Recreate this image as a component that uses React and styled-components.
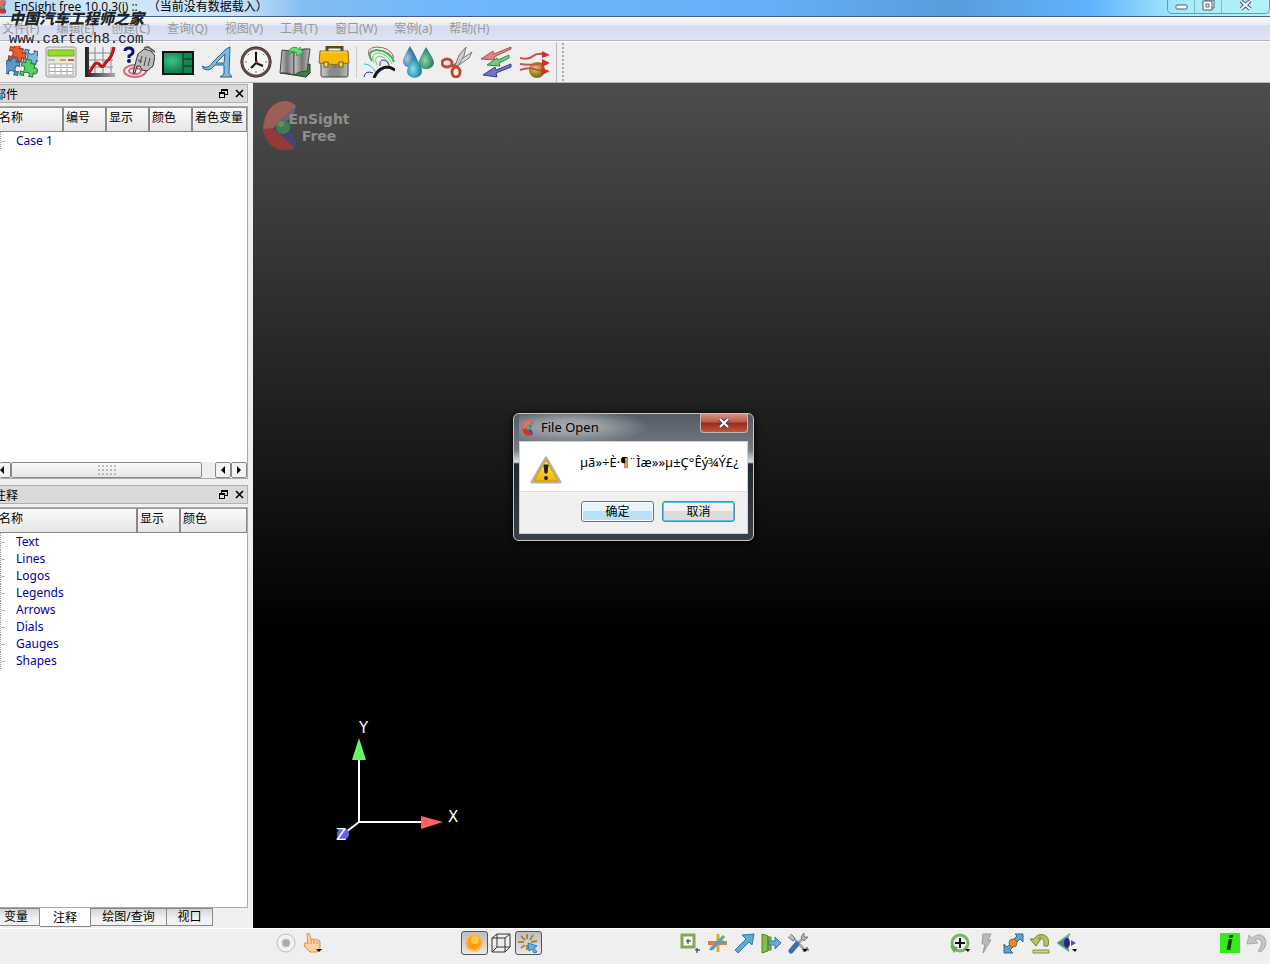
import React from "react";
import styled, { createGlobalStyle } from "styled-components";

const puzzlePiece = "M0 0h4c-3-5 8-5 5 0h4v4c5-3 5 8 0 5v4h-4c3-5-8-5-5 0h-4v-4c5 3 5-8 0-5z";

const icons = {
  puzzle: (
    <g transform="rotate(10 16 16)">
      <path d={puzzlePiece} transform="translate(2 3)" fill="#ea5a2e" stroke="#8c3318" />
      <path d={puzzlePiece} transform="translate(30 3) rotate(90)" fill="#7db8e0" stroke="#355f85" />
      <path d={puzzlePiece} transform="translate(1 30) rotate(-90)" fill="#5599cf" stroke="#2d5c88" />
      <path d={puzzlePiece} transform="translate(16 16)" fill="#5dce67" stroke="#2b7d39" />
    </g>
  ),
  calculator: (
    <>
      <rect x="1" y="1" width="30" height="30" rx="2" fill="#e6e6e2" stroke="#9c9c98" />
      <rect x="3" y="4" width="26" height="6" fill="#95dc22" stroke="#75a83a" />
      <path d="M3 13h7v2H3z" fill="#bbb" />
      <path d="M15 13h6v2h-6z" fill="#ec9c35" />
      <path d="M23 13h6v2h-6z" fill="#dc5545" />
      <path d="M4 18h24v11H4zM4 21.500h24M4 25.500h24M10 18v11M16 18v11M22 18v11" fill="#fff" stroke="#aaa" />
    </>
  ),
  graph: (
    <>
      <path d="M1 1h4v26h26v4H1z" fill="url(#axisFade)" />
      <path d="M5 7h24M5 14h24M5 21h24M11 1v26M19 1v26M27 1v26" fill="none" stroke="#888" />
      <path d="M5 27L10 19Q13 15 16 19T22 16Q28 12 30 1" fill="none" stroke="#8a0a10" strokeWidth="3" />
      <path d="M5 27L10 19Q13 15 16 19T22 16Q28 12 30 1" fill="none" stroke="#d0141c" strokeWidth="2" />
    </>
  ),
  pick: (
    <>
      <g fill="none" stroke="#d46c74" strokeWidth="2">
        <ellipse cx="12" cy="25" rx="11" ry="6" />
        <ellipse cx="12" cy="25" rx="6" ry="3" />
      </g>
      <path d="M2 5Q2 2 6 2t4 4q0 2-4 4v2" fill="none" stroke="#101080" strokeWidth="3" />
      <circle cx="6" cy="15" r="2" fill="#101080" />
      <path d="M10 27l3-12 2-7 6-5 7 2 4 5-2 10-6 5-5-1-2-4-3 0-2 7z" fill="#bdbdbd" stroke="#333" />
      <path d="M17 17l2-7M21 20l2-9M25 20l2-8M15 14l4 2" fill="none" stroke="#444" />
      <path d="M21 2l4-1 7 5" fill="none" stroke="#666" strokeWidth="2" />
    </>
  ),
  viewport: (
    <>
      <rect x="1" y="6" width="30" height="22" fill="url(#greenPane)" stroke="#111" strokeWidth="2" />
      <path d="M21 6v22M21 13h10M21 20h10" stroke="#082f20" />
    </>
  ),
  letter: (
    <path
      d="M1 20Q7 24 12 16L25 3 29 1 28 27 31 31H19L23 28 23 19H14Q10 24 7 24 2 24 1 20zM15 17H23L24 8z"
      fill="#7dbbe2"
      stroke="#305f84"
      fillRule="evenodd"
    />
  ),
  clock: (
    <>
      <circle cx="16" cy="16" r="14" fill="#f6f6f4" stroke="#655051" strokeWidth="3" />
      <circle cx="16" cy="16" r="15" fill="none" stroke="#4a3a3a" />
      <path d="M16 5v2M16 25v2M5 16h2M25 16h2M8 8l1 1M23 23l1 1M24 8l-1 1M8 24l1-1" stroke="#777" />
      <path d="M16 6v11l7 3M16 17l-5 5" fill="none" stroke="#111" strokeWidth="2" />
      <path d="M15 15h3v2h-3z" fill="#d22" />
    </>
  ),
  book: (
    <>
      <path d="M1 27l14 2 12 2 4-4V18L16 22z" fill="#3d8042" stroke="#223d24" />
      <path d="M3 4q8 0 12 3v22q-7-3-14-2z" fill="url(#page)" stroke="#444" />
      <path d="M15 7q6-5 16-4l-3 22q-8 0-13 4z" fill="url(#page)" stroke="#444" />
      <path d="M11 3Q16-1 21 4V1l3 6-7 3 1-3q-4-3-7-1v3H9z" fill="#6ade7e" stroke="#35a04b" />
    </>
  ),
  toolbox: (
    <>
      <path d="M9 5V1h15v4" fill="none" stroke="#5b4a14" strokeWidth="3" />
      <path d="M3 16h27v13q0 2-2 2H5q-2 0-2-2z" fill="url(#page)" stroke="#444" />
      <path d="M2 5h28l1 12q-15 3-30 0z" fill="#f6b90c" stroke="#99690c" />
      <path d="M3 6h26" stroke="#ffdc62" />
      <rect x="6" y="16" width="4" height="5" fill="#f5d84d" stroke="#775914" />
      <rect x="21" y="16" width="4" height="5" fill="#f5d84d" stroke="#775914" />
      <path d="M12 22h8l2 8H10z" fill="#8a8a8a" />
    </>
  ),
  contour: (
    <g fill="none">
      <path d="M8 14Q1 2 13 1Q28 1 31 12" stroke="#cb4b4b" />
      <path d="M9 15Q3 5 14 4Q27 5 31 16" stroke="#41b45b" strokeWidth="2" />
      <path d="M11 17Q7 8 15 7Q25 8 29 18M14 19Q10 11 17 10Q23 11 26 19" stroke="#69cf70" />
      <path d="M1 18Q9 18 13 27" stroke="#35bdd0" />
      <path d="M17 20q-1-6 4-6q4 1 5 5M1 31q1-7 9-4" stroke="#3434b1" />
      <path d="M11 32Q15 21 26 21L32 24" stroke="#151515" strokeWidth="3" />
    </g>
  ),
  drops: (
    <>
      <path d="M8 0q-7 12-7 15c0 9 15 8 14-1Q14 10 8 0z" fill="url(#blueDrop)" />
      <path d="M24 1q-7 12-7 15c0 10 15 9 15 0Q31 12 24 1z" fill="url(#greenDrop)" />
      <path d="M13 10Q5 21 5 25c0 9 15 9 15 0Q20 21 13 10z" fill="url(#cyanDrop)" />
    </>
  ),
  scissors: (
    <>
      <path d="M12 19L31 6l-3 6L15 21z" fill="#ddd" stroke="#777" />
      <path d="M14 20L18 9 25 1l-2 9-6 10z" fill="#ccc" stroke="#777" />
      <g fill="none" stroke="#c44831" strokeWidth="3">
        <ellipse cx="6" cy="17" rx="5" ry="4" />
        <ellipse cx="15" cy="26" rx="4" ry="5" />
        <path d="M10 19l6 2" />
      </g>
    </>
  ),
  vectors: (
    <>
      <path d="M31 1L14 8l-1-3L1 13l14 1-1-3L31 3z" fill="#e08387" stroke="#b0505a" />
      <path d="M29 9l-11 5-1-2-10 7 13 1-1-3 10-5z" fill="#6fd07c" stroke="#2d8b42" />
      <path d="M31 18l-15 6-1-3L3 29l14 2-1-4 15-6z" fill="#7373cb" stroke="#3c3c91" />
    </>
  ),
  streamlines: (
    <>
      <circle cx="18" cy="24" r="8" fill="url(#ball)" />
      <path d="M1 12q9 2 13-2t14-1M1 18q12 2 27-1M1 24q8-3 14-1t13 2" fill="none" stroke="#c8524a" strokeWidth="2" />
      <path d="M23 5l8 4-8 3zM23 13l8 4-8 4zM22 22l9 3-8 4z" fill="#d82d2d" />
    </>
  ),
  record: (
    <>
      <circle cx="11" cy="10" r="9" fill="#f2f2f2" stroke="#bbb" />
      <circle cx="11" cy="10" r="4" fill="#aaa" stroke="#c5c5c5" />
    </>
  ),
  hand: (
    <>
      <path d="M5 1q2-2 3 1l1 5q2-2 3 0 2-2 3 0 2-1 3 2l0 6-3 4H8l-5-5-1-3q1-2 3-1l1 1z" fill="#ffd0a0" stroke="#df8a45" />
      <path d="M9 7v4M12 7v4M15 8v3" stroke="#df8a45" />
      <path d="M14 16h6l-3 3z" fill="#000" />
    </>
  ),
  sun: (
    <>
      <circle cx="10" cy="10" r="7" fill="#ff9d16" />
      <circle cx="10" cy="10" r="8" fill="none" stroke="#ffb23a" strokeWidth="2" strokeDasharray="2 1" />
      <circle cx="11" cy="7" r="4" fill="#ffc544" />
    </>
  ),
  cube: <path d="M1 5h13v14H1zM1 5l5-4h13v13l-5 5M14 5l5-4M6 1v13h13M1 19l5-5" fill="none" stroke="#333" />,
  select: (
    <>
      <path d="M9 1v5M3 3l4 4M0 9h6M3 15l4-3M15 2l-3 5M13 9l6-1M9 12v5" fill="none" stroke="#aa883c" strokeWidth="2" />
      <path d="M10 10l9 3-3 2 3 4-3 1-2-4-3 2z" fill="#65b4e5" stroke="#347bab" />
    </>
  ),
  addRegion: (
    <>
      <rect x="2" y="2" width="12" height="12" fill="#fff" stroke="#84a652" strokeWidth="3" />
      <path d="M8 6v5M6 8h5M17 15v5M15 17h5" stroke="#222" />
    </>
  ),
  axes: (
    <>
      <path d="M11 1v18" stroke="#d4ac32" strokeWidth="3" />
      <path d="M1 10h19" stroke="#e0803c" strokeWidth="4" />
      <path d="M17 3L5 16" stroke="#5fae69" strokeWidth="3" />
      <path d="M16 9h-5L4 16" fill="none" stroke="#5999c6" strokeWidth="3" strokeLinecap="round" />
    </>
  ),
  arrow: <path d="M1 17L12 6 8 2 20 1 18 12 15 9 4 20z" fill="#5ea9d5" stroke="#3976a0" />,
  exit: (
    <>
      <path d="M1 1l6 2v15l-6 2zM7 4h3v13H7z" fill="#85bc43" stroke="#55852c" />
      <path d="M8 8h6V4l6 6-6 6v-4H8z" fill="#67aad6" stroke="#397aa4" />
    </>
  ),
  tools: (
    <>
      <path d="M5 5L17 17M16 4L4 17" stroke="#aaa" strokeWidth="3" />
      <path d="M3 1l4 4-2 3-5-4M13 4l3-4v4h4l-4 4zM15 19l4-5 2 4" fill="#bbb" stroke="#777" />
      <path d="M9 11L3 18" stroke="#3d6daf" strokeWidth="5" strokeLinecap="round" />
      <path d="M14 16h6l-3 3z" fill="#000" />
    </>
  ),
  rotate: (
    <>
      <circle cx="11" cy="10" r="8" fill="none" stroke="#7fb070" strokeWidth="3" />
      <circle cx="11" cy="10" r="6" fill="#eee" />
      <path d="M1 13l8 1-4 6z" fill="#67a855" />
      <path d="M11 5v10M6 10h10" stroke="#111" strokeWidth="2" />
      <path d="M16 16h5l-2 3z" fill="#000" />
    </>
  ),
  bolt: <path d="M7 1h8l-3 6h3l-8 13 2-9H6z" fill="#bbb" stroke="#999" />,
  resize: (
    <>
      <path d="M12 1h8v8l-3-3-4 4-3-3 4-4zM1 11l3 3 4-4 3 3-4 4 3 3H1z" fill="#5ca1cf" stroke="#35698d" />
      <circle cx="10" cy="10" r="4" fill="#e98c29" stroke="#a65c17" />
    </>
  ),
  reset: (
    <>
      <path d="M0 6h4q4-6 10-4t4 11h-4q1-6-2-8T8 6h3l-5 7z" fill="#b7c45c" stroke="#777e32" />
      <path d="M3 17h16v3H3z" fill="#d4d67f" stroke="#888b42" />
    </>
  ),
  eye: (
    <>
      <path d="M13 1L1 10l11 8" fill="none" stroke="#63b689" strokeWidth="2" />
      <path d="M1 10l11-7q-2 7 0 14z" fill="#667580" />
      <ellipse cx="10" cy="10" rx="3" ry="5" fill="#282884" />
      <path d="M14 7l5 3-5 3z" fill="#5555a4" />
      <path d="M15 16h5l-2 3z" fill="#000" />
    </>
  ),
  undo: <path d="M1 11l2-9 3 3q7-6 12-1 5 7-3 15l-3-1q6-8 2-11-3-2-5 0l3 3z" fill="#c5c5c5" stroke="#aaa" />,
};

const mainTools = [
  ["puzzle", "Parts"],
  ["calculator", "Calculator"],
  ["graph", "Plot"],
  ["pick", "Query"],
  ["viewport", "Viewports"],
  ["letter", "Annotations"],
  ["clock", "Time"],
  ["book", "Flipbook"],
  ["toolbox", "Toolbox"],
];
const partTools = [
  ["contour", "Contours"],
  ["drops", "Isosurfaces"],
  ["scissors", "Clips"],
  ["vectors", "Vector arrows"],
  ["streamlines", "Particle traces"],
];
const bottomGroups = [
  [["record", "Record"], ["hand", "Pick mode"]],
  [["sun", "Shaded", true], ["cube", "Hidden line"], ["select", "Highlight", true]],
  [["addRegion", "Add region"], ["axes", "Axes"], ["arrow", "Line tool"], ["exit", "Plane tool"], ["tools", "Tools"]],
  [["rotate", "Rotate"], ["bolt", "Fast display"], ["resize", "Fit"], ["reset", "Reset"], ["eye", "View"]],
];

const menus = ["文件(F)", "编辑(E)", "创建(C)", "查询(Q)", "视图(V)", "工具(T)", "窗口(W)", "案例(a)", "帮助(H)"];
const partColumns = [["名称", 64], ["编号", 43], ["显示", 43], ["颜色", 43], ["着色变量", 54]];
const noteColumns = [["名称", 138], ["显示", 43], ["颜色", 66]];
const notes = ["Text", "Lines", "Logos", "Legends", "Arrows", "Dials", "Gauges", "Shapes"];

function Icon({ name, size }) {
  return (
    <svg width={size} height={size} viewBox={`0 0 ${size} ${size}`} aria-hidden="true">
      {icons[name]}
    </svg>
  );
}

function Logo({ width, height }) {
  return (
    <svg width={width} height={height} viewBox="0 0 36 50" aria-hidden="true">
      <path d="M33 5Q28 0 21 0 9 1 3 14T2 35Q7 48 19 49 28 50 32 46L10 27z" fill="#d8322c" />
      <path d="M33 5Q28 0 21 0 9 1 3 14L0 28 10 27z" fill="#e07264" />
      <path d="M33 5L10 27 32 47Q34 42 31 36L25 26 30 16z" fill="#3b4a9c" />
      <path d="M33 5L10 27 20 22 30 16z" fill="#7a83ad" />
      <circle cx="20" cy="26" r="7" fill="#43a852" />
      <circle cx="18" cy="23" r="3" fill="#7cc784" />
    </svg>
  );
}

function Gradients() {
  return (
    <Defs aria-hidden="true">
      <defs>
        <linearGradient id="axisFade"><stop stopColor="#222" /><stop offset="1" stopColor="#aaa" /></linearGradient>
        <linearGradient id="page"><stop stopColor="#ccc" /><stop offset="0.5" stopColor="#777" /><stop offset="1" stopColor="#bbb" /></linearGradient>
        <radialGradient id="greenPane" cx="0.3" cy="0.4"><stop stopColor="#3fc28a" /><stop offset="1" stopColor="#12824e" /></radialGradient>
        <radialGradient id="blueDrop" cx="0.3" cy="0.6"><stop stopColor="#a5cceb" /><stop offset="1" stopColor="#37719f" /></radialGradient>
        <radialGradient id="greenDrop" cx="0.4" cy="0.6"><stop stopColor="#91d2b2" /><stop offset="1" stopColor="#318460" /></radialGradient>
        <radialGradient id="cyanDrop" cx="0.4" cy="0.6"><stop stopColor="#8be0ed" /><stop offset="1" stopColor="#228aa4" /></radialGradient>
        <radialGradient id="ball" cx="0.4" cy="0.4"><stop stopColor="#e8d858" /><stop offset="1" stopColor="#7c761b" /></radialGradient>
        <linearGradient id="warn" x2="0" y2="1"><stop stopColor="#ffe965" /><stop offset="1" stopColor="#f4b400" /></linearGradient>
      </defs>
    </Defs>
  );
}

function PanelTitle({ text }) {
  return (
    <TitleRow>
      <h2>{text}</h2>
      <PlainButton aria-label="Float">
        <svg width="9" height="9" viewBox="0 0 9 9" shapeRendering="crispEdges">
          <path d="M2 0h7v6H6V5h2V2H3v1H2zM0 3h6v6H0zM1 5v3h4V5z" fill="#000" fillRule="evenodd" />
        </svg>
      </PlainButton>
      <PlainButton aria-label="Close">
        <svg width="9" height="9" viewBox="0 0 9 9">
          <path d="M1 1l7 7M8 1L1 8" stroke="#000" strokeWidth="1.600" />
        </svg>
      </PlainButton>
    </TitleRow>
  );
}

function Tree({ columns, rows }) {
  return (
    <TreeTable>
      <thead>
        <tr>
          {columns.map(([label, width]) => (
            <HeadCell key={label} $width={width}>{label}</HeadCell>
          ))}
        </tr>
      </thead>
      <tbody>
        {rows.map((row) => (
          <tr key={row}>
            <NameCell colSpan={columns.length}>{row}</NameCell>
          </tr>
        ))}
      </tbody>
    </TreeTable>
  );
}

function FileDialog() {
  return (
    <Dialog role="dialog" aria-labelledby="dialog-title">
      <DialogTitle>
        <Logo width={12} height={16} />
        <h2 id="dialog-title">File Open</h2>
        <DialogClose aria-label="Close">
          <svg width="12" height="10" viewBox="0 0 12 10">
            <path d="M2 1l8 8M10 1L2 9" stroke="#444" strokeWidth="4" />
            <path d="M2 1l8 8M10 1L2 9" stroke="#fff" strokeWidth="2" />
          </svg>
        </DialogClose>
      </DialogTitle>
      <DialogBody>
        <Message>
          <svg width="32" height="30" viewBox="0 0 32 30" aria-hidden="true">
            <path d="M16 3L30 27H2z" fill="url(#warn)" stroke="#b5b2a8" strokeWidth="3" strokeLinejoin="round" />
            <path d="M16 5L28 26H4z" fill="url(#warn)" stroke="#d89a00" />
            <path d="M14 10h4l-1 8h-2z" fill="#222" stroke="#222" />
            <circle cx="16" cy="23" r="2" fill="#222" />
          </svg>
          <p>µã»÷È·¶¨Ìæ»»µ±Ç°Êý¾Ý£¿</p>
        </Message>
        <Actions>
          <ActionButton>确定</ActionButton>
          <ActionButton $focused>取消</ActionButton>
        </Actions>
      </DialogBody>
    </Dialog>
  );
}

function App() {
  return (
    <Window>
      <GlobalStyle />
      <Gradients />
      <TitleBar>
        <Logo width={10} height={14} />
        <h1>EnSight free 10.0.3(i) ::</h1>
        <span>（当前没有数据载入）</span>
        <WindowButtons>
          <WindowButton aria-label="Minimize">
            <svg width="13" height="13" viewBox="0 0 13 13"><rect x="1" y="5" width="11" height="4" rx="1" fill="#fff" stroke="#50566b" /></svg>
          </WindowButton>
          <WindowButton aria-label="Restore">
            <svg width="13" height="13" viewBox="0 0 13 13">
              <path d="M4 0h8v8H4z" fill="#fff" stroke="#50566b" />
              <path d="M1 1h9v9H1zM4 4h3v3H4z" fill="#fff" stroke="#50566b" />
            </svg>
          </WindowButton>
          <WindowButton aria-label="Close" $wide>
            <svg width="13" height="13" viewBox="0 0 13 13">
              <path d="M2 1l9 8M11 1L2 9" stroke="#50566b" strokeWidth="4" />
              <path d="M2 1l9 8M11 1L2 9" stroke="#fff" strokeWidth="2" />
            </svg>
          </WindowButton>
        </WindowButtons>
      </TitleBar>
      <MenuBar>
        {menus.map((menu) => (
          <MenuButton key={menu}>{menu}</MenuButton>
        ))}
      </MenuBar>
      <Watermark>
        <strong>中国汽车工程师之家</strong>
        <span>www.cartech8.com</span>
      </Watermark>
      <Toolbar>
        {mainTools.map(([name, label]) => (
          <PlainButton key={name} aria-label={label}><Icon name={name} size={32} /></PlainButton>
        ))}
        <Separator />
        {partTools.map(([name, label]) => (
          <PlainButton key={name} aria-label={label}><Icon name={name} size={32} /></PlainButton>
        ))}
        <Grip />
      </Toolbar>
      <Main>
        <Sidebar>
          <Panel $grow={395}>
            <PanelTitle text="部件" />
            <PanelBody>
              <Tree columns={partColumns} rows={["Case 1"]} />
              <ScrollBar>
                <ScrollButton aria-label="Scroll back" $small><ScrollArrow /></ScrollButton>
                <ScrollThumb><i /></ScrollThumb>
                <ScrollTrack />
                <ScrollButton aria-label="Scroll left"><ScrollArrow /></ScrollButton>
                <ScrollButton aria-label="Scroll right"><ScrollArrow $right /></ScrollButton>
              </ScrollBar>
            </PanelBody>
          </Panel>
          <Panel $grow={423}>
            <PanelTitle text="注释" />
            <PanelBody>
              <Tree columns={noteColumns} rows={notes} />
            </PanelBody>
          </Panel>
          <Tabs>
            <Tab $width={40}>变量</Tab>
            <Tab $width={51} $active>注释</Tab>
            <Tab $width={76}>绘图/查询</Tab>
            <Tab $width={46}>视口</Tab>
          </Tabs>
        </Sidebar>
        <Viewport>
          <Brand>
            <Logo width={36} height={50} />
            <p>EnSight<br />Free</p>
          </Brand>
          <Triad width="150" height="130" viewBox="0 0 150 130">
            <path d="M29 38V102H93M29 102L16 112" fill="none" stroke="#fff" strokeWidth="2" />
            <path d="M29 18l7 22H22z" fill="#62fa62" />
            <path d="M91 96l22 6-22 7z" fill="#ff6262" />
            <circle cx="13" cy="114" r="6" fill="#6262f0" />
            <text x="29" y="13">Y</text>
            <text x="118" y="102">X</text>
            <text x="6" y="120">Z</text>
          </Triad>
        </Viewport>
      </Main>
      <BottomBar>
        {bottomGroups.map((group, index) => (
          <Group key={index}>
            {group.map(([name, label, pressed]) => (
              <SmallButton key={name} aria-label={label} $pressed={pressed}>
                <Icon name={name} size={21} />
              </SmallButton>
            ))}
          </Group>
        ))}
        <Group>
          <SmallButton aria-label="Information"><Info>i</Info></SmallButton>
          <SmallButton aria-label="Undo"><Icon name="undo" size={21} /></SmallButton>
        </Group>
      </BottomBar>
      <FileDialog />
    </Window>
  );
}

export default App;

const GlobalStyle = createGlobalStyle`
  * {
    box-sizing: border-box;
  }
  body {
    margin: 0;
    font-family: "Noto Sans", "Noto Sans CJK SC", sans-serif;
    font-size: 12px;
    color: #000;
  }
  h1, h2, p {
    margin: 0;
    font-size: 12px;
    font-weight: normal;
  }
  button {
    padding: 0;
    color: #000;
    font: inherit;
  }
  svg {
    display: block;
    flex: none;
  }
`;

const Defs = styled.svg`
  position: absolute;
  width: 0;
  height: 0;
`;

const Window = styled.div`
  position: relative;
  display: flex;
  flex-direction: column;
  min-height: 100vh;
  overflow: hidden;
  background: #efefef;
`;

const TitleBar = styled.header`
  display: flex;
  height: 17px;
  line-height: 14px;
  border-bottom: 1px solid #41618c;
  overflow: hidden;
  background: linear-gradient(90deg, #b5d8f5 0%, #d3e8f8 8%, #c5e1f8 19%, #83bdf2 24%, #70b8fb 35%, #66b0f8 60%, #589ddb 75%, #61b3ff 86%, #a5ecfa 93%, #b4f3f6 100%);
  > svg {
    margin-left: -3px;
  }
  h1 {
    margin-left: 7px;
    font-family: "Open Sans", sans-serif;
    white-space: nowrap;
  }
  span {
    margin-left: 10px;
    white-space: nowrap;
  }
`;

const WindowButtons = styled.div`
  display: flex;
  height: 14px;
  margin-left: auto;
  border: 1px solid #639ba9;
  border-top: 0;
  border-radius: 0 0 5px 5px;
`;

const WindowButton = styled.button`
  display: flex;
  width: ${(props) => (props.$wide ? "47px" : "27px")};
  align-items: center;
  justify-content: center;
  border: 0;
  border-right: ${(props) => (props.$wide ? "0" : "1px solid #82bac5")};
  background: transparent;
`;

const MenuBar = styled.nav`
  display: flex;
  gap: 17px;
  height: 24px;
  padding: 0 0 2px 2px;
  border-bottom: 1px solid #aeb2c4;
  background: linear-gradient(#fdfdff 0, #e8ebf5 8px, #d5dbee 9px, #dfe4f4 100%);
`;

const MenuButton = styled.button`
  border: 0;
  background: transparent;
  color: #999;
  white-space: nowrap;
`;

const Watermark = styled.div`
  position: absolute;
  top: 8px;
  left: 9px;
  display: flex;
  flex-direction: column;
  color: #222;
  strong {
    font: italic 900 15px/20px "Noto Sans CJK SC", sans-serif;
  }
  span {
    font: 14px/22px "Liberation Mono", monospace;
  }
`;

const Toolbar = styled.div`
  display: flex;
  gap: 7px;
  align-items: center;
  height: 42px;
  padding-left: 6px;
  border-top: 1px solid #fff;
  border-bottom: 1px solid #b5b5b5;
`;

const PlainButton = styled.button`
  border: 0;
  background: transparent;
`;

const Separator = styled.div`
  width: 1px;
  height: 32px;
  margin: 0 -1px 0 -1px;
  background: #ccc;
`;

const Grip = styled.div`
  width: 8px;
  height: 40px;
  margin-left: -2px;
  border-left: 1px solid #bbb;
  background: radial-gradient(circle, #aaa 1px, transparent 1px) 4px 0 / 4px 4px repeat-y;
`;

const Main = styled.main`
  display: flex;
  flex: 1;
`;

const Sidebar = styled.aside`
  display: flex;
  flex: none;
  flex-direction: column;
  width: 253px;
  padding: 1px 5px 0 0;
`;

const Panel = styled.section`
  display: flex;
  flex: ${(props) => props.$grow} 0 0;
  flex-direction: column;
  gap: 3px;
  margin-bottom: 6px;
  & + & {
    margin-bottom: 0;
  }
`;

const TitleRow = styled.div`
  display: flex;
  gap: 7px;
  align-items: center;
  height: 19px;
  padding-right: 3px;
  border: 1px solid #b0b0b0;
  border-left: 0;
  background: #dadada;
  h2 {
    flex: 1;
    text-indent: -6px;
  }
`;

const PanelBody = styled.div`
  display: flex;
  flex: 1;
  flex-direction: column;
  border: 1px solid #aaa;
  border-left: 0;
  background: #fff;
`;

const TreeTable = styled.table`
  width: 100%;
  border-spacing: 0;
  table-layout: fixed;
  color: #0000a8;
`;

const HeadCell = styled.th`
  width: ${(props) => props.$width}px;
  height: 25px;
  padding: 0 0 4px 2px;
  border-top: 1px solid #999;
  border-right: 2px solid #888;
  border-bottom: 1px solid #888;
  background: linear-gradient(#fafafa, #e6e6e6);
  color: #000;
  font-weight: normal;
  line-height: 18px;
  text-align: left;
  white-space: nowrap;
  &:first-child {
    padding-left: 0;
    text-indent: -1px;
  }
  &:last-child {
    border-right-width: 1px;
  }
`;

const NameCell = styled.td`
  height: 17px;
  padding: 1px 0 0 15px;
  border-left: 1px dotted #999;
  background: linear-gradient(#bbb, #bbb) 0 9px / 4px 1px no-repeat;
  line-height: 16px;
`;

const ScrollBar = styled.div`
  display: flex;
  height: 16px;
  margin-top: auto;
`;

const ScrollButton = styled.button`
  display: flex;
  width: ${(props) => (props.$small ? "11px" : "16px")};
  align-items: center;
  justify-content: ${(props) => (props.$small ? "flex-start" : "center")};
  border: 1px solid #888;
  border-left-width: ${(props) => (props.$small ? "0" : "1px")};
  border-radius: 2px;
  background: #f3f3f3;
`;

const ScrollArrow = styled.i`
  border: 4px solid transparent;
  border-left: ${(props) => (props.$right ? "4px solid #000" : "0")};
  border-right: ${(props) => (props.$right ? "0" : "4px solid #000")};
`;

const ScrollThumb = styled.div`
  display: flex;
  flex: 1;
  align-items: center;
  justify-content: center;
  border: 1px solid #888;
  border-radius: 2px;
  background: linear-gradient(#fafafa, #e6e6e6);
  i {
    width: 20px;
    height: 12px;
    background: radial-gradient(circle, #bbb 1px, transparent 1px) 0 0 / 4px 4px;
  }
`;

const ScrollTrack = styled.div`
  width: 13px;
  background: #eee;
`;

const Tabs = styled.div`
  display: flex;
  height: 20px;
  align-items: flex-start;
`;

const Tab = styled.button`
  width: ${(props) => props.$width}px;
  height: ${(props) => (props.$active ? "19px" : "18px")};
  border: 1px solid #888;
  border-top-width: ${(props) => (props.$active ? "0" : "1px")};
  border-left-width: 0;
  background: ${(props) => (props.$active ? "#fff" : "linear-gradient(#d5d5d5, #f2f2f2 60%)")};
  line-height: ${(props) => (props.$active ? "19px" : "16px")};
  white-space: nowrap;
  &:first-child {
    padding-right: 7px;
  }
`;

const Viewport = styled.section`
  display: flex;
  flex: 1;
  flex-direction: column;
  justify-content: space-between;
  padding: 18px 10px 78px;
  background: linear-gradient(#4d4d4d, #000 65%);
`;

const Brand = styled.div`
  display: flex;
  align-items: flex-end;
  opacity: 0.55;
  p {
    width: 64px;
    margin-left: -12px;
    padding-bottom: 6px;
    color: #c8c8c8;
    font: bold 14px/17px "DejaVu Sans", sans-serif;
    text-align: center;
  }
`;

const Triad = styled.svg`
  margin-left: 67px;
  text {
    fill: #fff;
    font: 15px "DejaVu Sans", sans-serif;
  }
`;

const BottomBar = styled.footer`
  display: flex;
  justify-content: space-between;
  height: 36px;
  padding: 2px 0 0 272px;
  border-top: 1px solid #fff;
`;

const Group = styled.div`
  display: flex;
`;

const SmallButton = styled.button`
  display: flex;
  width: 27px;
  height: 24px;
  align-items: center;
  justify-content: center;
  border: ${(props) => (props.$pressed ? "1px solid #555" : "0")};
  border-radius: 3px;
  background: ${(props) => (props.$pressed ? "linear-gradient(#bdbdbd, #e8e8e8)" : "transparent")};
`;

const Info = styled.span`
  width: 20px;
  height: 20px;
  background: #39ea1d;
  color: #143b10;
  font: italic bold 20px/20px "DejaVu Sans", sans-serif;
`;

const Dialog = styled.div`
  position: absolute;
  top: 413px;
  left: 513px;
  width: 241px;
  padding: 0 5px 6px;
  border: 1px solid #c3c7cb;
  border-radius: 6px;
  background: linear-gradient(#535b65 0, #747b83 36px, #dfe2e5 48px, #222831 50px, #39414b 100%);
  box-shadow: 0 2px 8px #000;
`;

const DialogTitle = styled.div`
  display: flex;
  height: 27px;
  align-items: center;
  padding-left: 3px;
  background: radial-gradient(80px 18px at 50px 13px, #a8acb0 0, #9a9ea3 40%, transparent 100%);
  h2 {
    flex: 1;
    margin-left: 7px;
    padding-bottom: 2px;
    font-size: 13px;
  }
`;

const DialogClose = styled.button`
  display: flex;
  width: 48px;
  height: 19px;
  align-items: center;
  justify-content: center;
  align-self: flex-start;
  border: 1px solid #c4b6b3;
  border-top: 0;
  border-radius: 0 0 4px 4px;
  background: linear-gradient(#d19488, #bd5645 45%, #992a1b 50%, #c2563f);
`;

const DialogBody = styled.div`
  border: 1px solid #d0d3d6;
  background: #f0f0f0;
`;

const Message = styled.div`
  display: flex;
  height: 50px;
  padding: 13px 0 0 10px;
  border-bottom: 1px solid #ddd;
  background: #fff;
  p {
    margin-left: 18px;
    font-size: 13px;
    line-height: 14px;
    white-space: nowrap;
  }
`;

const Actions = styled.div`
  display: flex;
  gap: 8px;
  justify-content: flex-end;
  padding: 9px 12px 11px;
`;

const ActionButton = styled.button`
  width: 73px;
  height: 21px;
  border: 1px solid ${(props) => (props.$focused ? "#3c8fb5" : "#3c7fb1")};
  border-radius: 3px;
  background: ${(props) =>
    props.$focused ? "linear-gradient(#f2f2f2 50%, #dcdcdc 50%)" : "linear-gradient(#e8f5fc 50%, #b8e1f7 50%)"};
  box-shadow: ${(props) => (props.$focused ? "inset 0 0 0 1px #56c8ef" : "inset 0 0 0 1px #f2fafe")};
  line-height: 18px;
`;
